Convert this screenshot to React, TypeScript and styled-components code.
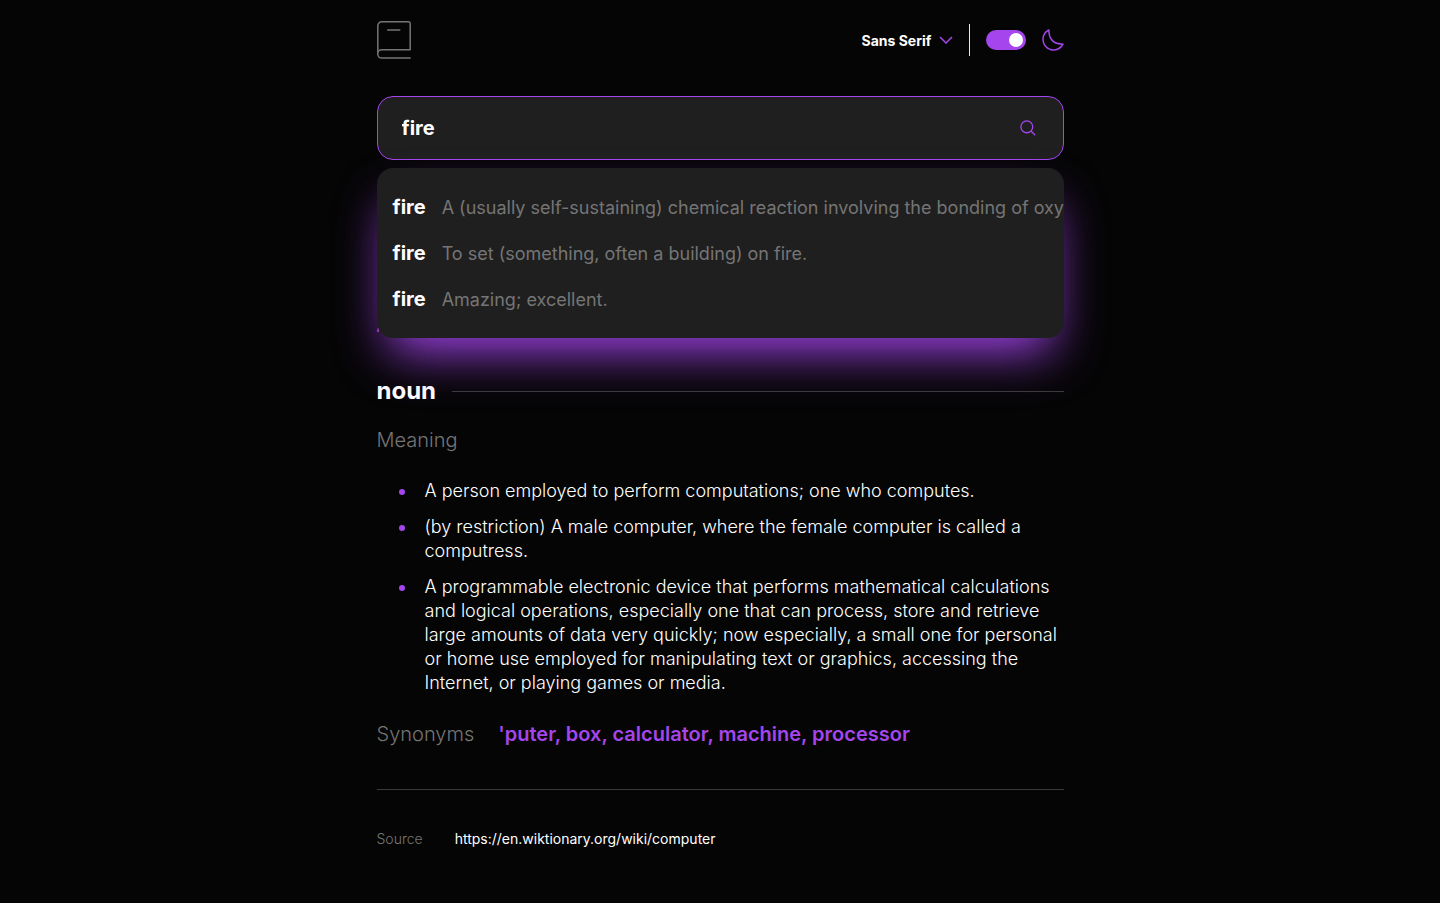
import React, { useState } from 'react';
import styled, { createGlobalStyle } from 'styled-components';

const purple = '#a445ed';
const grey = '#757575';

const GlobalStyle = createGlobalStyle`
  *, *::before, *::after { box-sizing: border-box; }
  body {
    margin: 0;
    background: #050505;
    color: #fff;
    font-family: Inter, "Liberation Sans", sans-serif;
    font-size: 18px;
    line-height: 24px;
  }
  h1, h2, h3, p, ul, dl, dd { margin: 0; padding: 0; }
  button, input, select { font: inherit; color: inherit; }
`;

const Page = styled.div`
  width: 100%;
  max-width: 687px;
  margin: 0 auto;
  padding: 20px 0 48px;
`;

const Header = styled.header`
  display: flex;
  align-items: center;
  justify-content: space-between;
  height: 40px;
`;

const Controls = styled.div`
  display: flex;
  align-items: center;
  gap: 16px;
`;

const FontPicker = styled.label`
  display: flex;
  align-items: center;
  gap: 7px;
`;

const FontSelect = styled.select`
  appearance: none;
  padding: 2px 0 0;
  border: 0;
  outline: 0;
  background: transparent;
  font-size: 14px;
  font-weight: 700;
  line-height: 24px;
`;

const Divider = styled.span`
  width: 1px;
  height: 32px;
  background: #e9e9e9;
`;

const Toggle = styled.input`
  appearance: none;
  display: flex;
  align-items: center;
  justify-content: flex-end;
  width: 40px;
  height: 20px;
  margin: 0;
  padding: 3px;
  border-radius: 10px;
  background: ${purple};
  cursor: pointer;

  &::before {
    content: '';
    width: 14px;
    height: 14px;
    border-radius: 50%;
    background: #fff;
  }

  &:not(:checked) {
    justify-content: flex-start;
    background: ${grey};
  }
`;

const ThemeLabel = styled.label`
  display: flex;
  align-items: center;
  gap: 16px;
`;

const Search = styled.form`
  position: relative;
  margin-top: 36px;
`;

const SearchBox = styled.div`
  display: flex;
  align-items: center;
  height: 64px;
  padding: 0 24px;
  border: 1px solid ${purple};
  border-radius: 16px;
  background: #1f1f1f;
`;

const SearchInput = styled.input`
  flex: 1;
  min-width: 0;
  padding: 0;
  border: 0;
  outline: 0;
  background: transparent;
  font-size: 20px;
  font-weight: 700;
`;

const SearchButton = styled.button`
  display: flex;
  padding: 3px;
  border: 0;
  background: transparent;
  cursor: pointer;
`;

const Suggestions = styled.ul`
  position: absolute;
  z-index: 1;
  top: 100%;
  left: 0;
  right: 0;
  margin-top: 8px;
  padding: 16px 0;
  overflow: hidden;
  border-radius: 16px;
  background: #1f1f1f;
  box-shadow: 0 25px 50px -12px ${purple};
  list-style: none;
`;

const Suggestion = styled.button`
  display: flex;
  align-items: baseline;
  gap: 16px;
  width: 100%;
  padding: 8px 16px;
  border: 0;
  background: transparent;
  text-align: left;
  white-space: nowrap;
  cursor: pointer;
`;

const SuggestedWord = styled.strong`
  font-size: 20px;
  font-weight: 700;
  line-height: 30px;
`;

const SuggestedMeaning = styled.span`
  color: ${grey};
  font-weight: 400;
  line-height: 24px;
`;

const Phonetic = styled.p`
  padding-top: 149px;
  color: ${purple};
  line-height: 30px;
`;

const PartOfSpeech = styled.div`
  display: flex;
  align-items: center;
  gap: 16px;
  margin-top: 36px;
`;

const PartTitle = styled.h2`
  font-size: 24px;
  font-weight: 700;
  line-height: 32px;
`;

const Rule = styled.hr`
  flex: 1;
  margin: 0;
  border: 0;
  border-top: 1px solid #3a3a3a;
`;

const Label = styled.h3`
  color: ${grey};
  font-size: 20px;
  font-weight: 300;
  line-height: 28px;
`;

const Meanings = styled.section`
  margin-top: 19px;
`;

const Definitions = styled.ul`
  display: flex;
  flex-direction: column;
  gap: 12px;
  margin-top: 25px;
  padding-left: 40px;
`;

const Definition = styled.li`
  padding-left: 8px;
  font-weight: 300;

  &::marker { color: ${purple}; }
`;

const Synonyms = styled.section`
  display: flex;
  gap: 24px;
  margin: 25px 0 41px;
`;

const SynonymList = styled.p`
  color: ${purple};
  font-size: 20px;
  font-weight: 600;
  line-height: 28px;
`;

const Source = styled.footer`
  display: flex;
  gap: 32px;
  margin-top: 37px;
  font-size: 14px;
`;

const SourceLabel = styled.span`
  color: ${grey};
  font-weight: 300;
`;

const SourceLink = styled.a`
  color: #fff;
  text-decoration: none;
`;

const suggestions = [
  'A (usually self-sustaining) chemical reaction involving the bonding of oxygen with carbon or other fuel.',
  'To set (something, often a building) on fire.',
  'Amazing; excellent.',
];

const definitions = [
  'A person employed to perform computations; one who computes.',
  '(by restriction) A male computer, where the female computer is called a computress.',
  'A programmable electronic device that performs mathematical calculations and logical operations, especially one that can process, store and retrieve large amounts of data very quickly; now especially, a small one for personal or home use employed for manipulating text or graphics, accessing the Internet, or playing games or media.',
];

const BookIcon = () => (
  <svg width="34" height="38" viewBox="0 0 34 38" fill="none" stroke={grey} strokeWidth="1.5" strokeLinecap="round" aria-hidden="true">
    <path d="M33.2 28.7V2.6A1.8 1.8 0 0 0 31.4.8H4.8A4 4 0 0 0 .8 4.8V33M33.2 28.7H4.9a4.1 4.1 0 0 0 0 8.4H33.2M10.7 9H22.8" />
  </svg>
);

const ChevronIcon = () => (
  <svg width="14" height="8" viewBox="0 0 14 8" fill="none" stroke={purple} strokeWidth="1.5" aria-hidden="true">
    <path d="m1 1 6 6 6-6" />
  </svg>
);

const MoonIcon = () => (
  <svg width="22" height="22" viewBox="0 0 22 22" fill="none" stroke={purple} strokeWidth="1.5" strokeLinecap="round" strokeLinejoin="round" aria-hidden="true">
    <path d="M1 10.449a10.544 10.544 0 0 0 19.993 4.686C11.544 15.135 6.858 10.448 6.858 1A10.545 10.545 0 0 0 1 10.449Z" />
  </svg>
);

const SearchIcon = () => (
  <svg width="16" height="16" viewBox="0 0 18 18" fill="none" stroke={purple} strokeWidth="1.5" strokeLinecap="round" strokeLinejoin="round" aria-hidden="true">
    <path d="m12.663 12.663 3.887 3.887M1 7.664a6.665 6.665 0 1 0 13.33 0 6.665 6.665 0 0 0-13.33 0Z" />
  </svg>
);

export default function App() {
  const [query, setQuery] = useState('fire');
  const [dark, setDark] = useState(true);

  return (
    <Page>
      <GlobalStyle />
      <Header>
        <BookIcon />
        <Controls>
          <FontPicker>
            <FontSelect aria-label="Font">
              <option>Sans Serif</option>
            </FontSelect>
            <ChevronIcon />
          </FontPicker>
          <Divider />
          <ThemeLabel>
            <Toggle type="checkbox" aria-label="Dark mode" checked={dark} onChange={() => setDark(!dark)} />
            <MoonIcon />
          </ThemeLabel>
        </Controls>
      </Header>

      <Search onSubmit={(e) => e.preventDefault()}>
        <SearchBox>
          <SearchInput aria-label="Search for a word" value={query} onChange={(e) => setQuery(e.target.value)} />
          <SearchButton type="submit" aria-label="Search">
            <SearchIcon />
          </SearchButton>
        </SearchBox>
        <Suggestions>
          {suggestions.map((meaning) => (
            <li key={meaning}>
              <Suggestion type="button">
                <SuggestedWord>fire</SuggestedWord>
                <SuggestedMeaning>{meaning}</SuggestedMeaning>
              </Suggestion>
            </li>
          ))}
        </Suggestions>
      </Search>

      <main>
        <Phonetic>/kəmˈpjuːtə/</Phonetic>
        <PartOfSpeech>
          <PartTitle>noun</PartTitle>
          <Rule />
        </PartOfSpeech>
        <Meanings>
          <Label>Meaning</Label>
          <Definitions>
            {definitions.map((text) => (
              <Definition key={text}>{text}</Definition>
            ))}
          </Definitions>
        </Meanings>
        <Synonyms>
          <Label>Synonyms</Label>
          <SynonymList>'puter, box, calculator, machine, processor</SynonymList>
        </Synonyms>
      </main>

      <Rule />
      <Source>
        <SourceLabel>Source</SourceLabel>
        <SourceLink href="https://en.wiktionary.org/wiki/computer">https://en.wiktionary.org/wiki/computer</SourceLink>
      </Source>
    </Page>
  );
}
